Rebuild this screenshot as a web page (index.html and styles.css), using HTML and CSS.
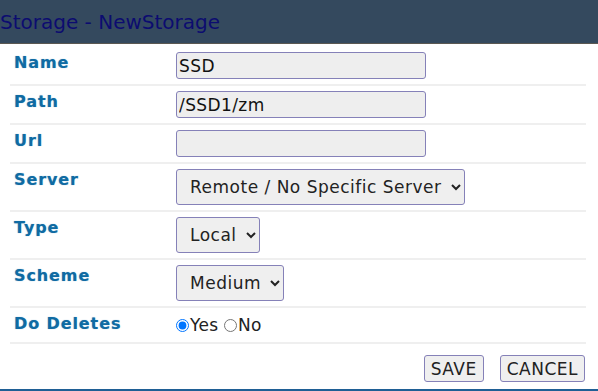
FILE: index.html
```html
<!DOCTYPE html>
<html lang="en">
<head>
    <meta charset="UTF-8">
    <meta name="viewport" content="width=device-width, initial-scale=1.0">
    <title>Storage - NewStorage</title>
    <link rel="stylesheet" href="styles.css">
</head>
<body>
    <div class="modal-dialog">
        <div class="modal-header">
            <h2 class="modal-title">Storage - NewStorage</h2>
        </div>
        <div class="modal-body">
            <table class="major">
                <tr>
                    <th>Name</th>
                    <td><input type="text" class="text-input" value="SSD"></td>
                </tr>
                <tr>
                    <th>Path</th>
                    <td><input type="text" class="text-input" value="/SSD1/zm"></td>
                </tr>
                <tr>
                    <th>Url</th>
                    <td><input type="text" class="text-input" value=""></td>
                </tr>
                <tr>
                    <th>Server</th>
                    <td>
                        <select class="chosen">
                            <option>Remote / No Specific Server</option>
                        </select>
                    </td>
                </tr>
                <tr>
                    <th>Type</th>
                    <td>
                        <select class="chosen">
                            <option>Local</option>
                        </select>
                    </td>
                </tr>
                <tr>
                    <th>Scheme</th>
                    <td>
                        <select class="chosen">
                            <option>Medium</option>
                        </select>
                    </td>
                </tr>
                <tr>
                    <th>Do Deletes</th>
                    <td class="radios">
                        <label><input type="radio" name="dodeletes" checked>Yes</label>
                        <label><input type="radio" name="dodeletes">No</label>
                    </td>
                </tr>
            </table>
        </div>
        <div class="modal-footer">
            <button type="button">SAVE</button>
            <button type="button">CANCEL</button>
        </div>
    </div>
</body>
</html>
```

FILE: styles.css
```css
body {
    font-family: "DejaVu Sans", Verdana, sans-serif;
    margin: 0;
    background-color: #fff;
}
.modal-dialog {
    height: 389px;
    border-bottom: 2px solid #1f5f95;
}
.modal-header {
    height: 43px;
    background-color: #34495e;
    border-bottom: 1px solid #5b5852;
    display: flex;
    align-items: center;
}
.modal-title {
    margin: 0;
    font-size: 20px;
    font-weight: normal;
    color: #0c0c70;
}
.modal-body {
    padding: 3px 12px 0 10px;
}
.major {
    width: 100%;
    border-collapse: collapse;
}
.major th,
.major td {
    padding: 5px 4px;
    border-bottom: 2px solid #efefef;
    vertical-align: top;
    text-align: left;
}
.major th {
    width: 154px;
    font-size: 16px;
    letter-spacing: 0.9px;
    color: #0f6ba3;
    padding-top: 6px;
    text-shadow: 0 0 1px rgba(15, 107, 163, 0.5);
}
.text-input {
    display: block;
    box-sizing: border-box;
    width: 250px;
    height: 27px;
    margin: 0;
    padding: 1px 2px;
    font-family: inherit;
    font-size: 17px;
    letter-spacing: 0.4px;
    color: #111;
    background-color: #eee;
    border: 1px solid #8581b8;
    border-radius: 3px;
}
.chosen {
    display: block;
    box-sizing: border-box;
    height: 36px;
    margin: 0;
    padding: 4px 6px 4px 9px;
    font-family: inherit;
    font-size: 17px;
    letter-spacing: 0.5px;
    color: #222;
    background-color: #efefef;
    border: 1px solid #8581b8;
    border-radius: 3px;
}
.radios {
    font-size: 17px;
    letter-spacing: 0.3px;
    color: #222;
    line-height: 24px;
}
.radios input {
    margin: 0 1px 0 0;
    width: 13px;
    height: 13px;
    vertical-align: -1px;
}
.modal-footer {
    display: flex;
    justify-content: flex-end;
    gap: 16px;
    padding: 11px 13px 0 0;
}
.modal-footer button {
    height: 27px;
    padding: 0 6px;
    font-family: inherit;
    font-size: 17px;
    letter-spacing: 0.5px;
    color: #222;
    background-color: #efefef;
    border: 1px solid #8581b8;
    border-radius: 3px;
}
```
